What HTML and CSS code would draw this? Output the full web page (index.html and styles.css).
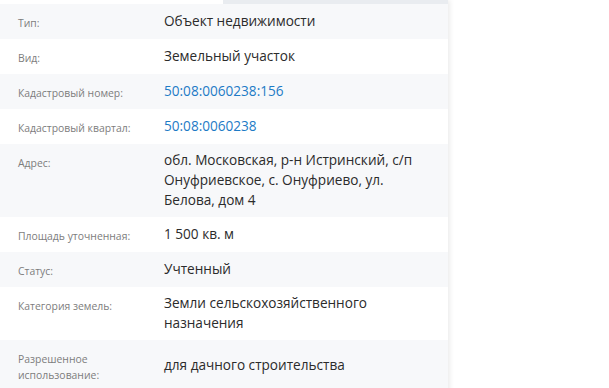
FILE: index.html
```html
<!DOCTYPE html>
<html lang="ru">
<head>
<meta charset="utf-8">
<link rel="stylesheet" href="styles.css">
</head>
<body>
<div class="panel">
  <div class="tabs"><div class="tab-gap"></div><div class="tab-rest"></div></div>
  <dl class="props">
    <div class="row alt"><dt>Тип:</dt><dd>Объект недвижимости</dd></div>
    <div class="row"><dt>Вид:</dt><dd>Земельный участок</dd></div>
    <div class="row alt"><dt>Кадастровый номер:</dt><dd><a class="link" href="#">50:08:0060238:156</a></dd></div>
    <div class="row"><dt>Кадастровый квартал:</dt><dd><a class="link" href="#">50:08:0060238</a></dd></div>
    <div class="row alt"><dt>Адрес:</dt><dd>обл. Московская, р-н Истринский, с/п Онуфриевское, с. Онуфриево, ул. Белова, дом 4</dd></div>
    <div class="row"><dt>Площадь уточненная:</dt><dd>1 500 кв. м</dd></div>
    <div class="row alt"><dt>Статус:</dt><dd>Учтенный</dd></div>
    <div class="row"><dt>Категория земель:</dt><dd>Земли сельскохозяйственного назначения</dd></div>
    <div class="row alt"><dt>Разрешенное использование:</dt><dd>для дачного строительства</dd></div>
  </dl>
</div>
</body>
</html>
```
FILE: styles.css
```css
html, body {
  margin: 0;
  padding: 0;
  background: #fff;
  overflow: hidden;
}
body {
  font-family: "Open Sans", "Noto Sans", sans-serif;
  color: #333;
}
.panel {
  width: 448px;
  background: #fff;
  box-shadow: 2px 0 5px rgba(0, 0, 0, 0.08);
  min-height: 400px;
}
.tabs {
  display: flex;
  height: 4px;
}
.tab-gap {
  width: 223px;
  background: #fff;
}
.tab-rest {
  flex: 1;
  background: #e9ecf0;
}
.props {
  margin: 0;
}
.row {
  display: grid;
  grid-template-columns: 146px 1fr;
  padding: 0 18px;
  background: #fff;
}
.row.alt {
  background: #f7f8fa;
}
.row dt {
  font-size: 10.4px;
  line-height: 16px;
  color: #7d7d7d;
  padding: 11px 0 8px;
  align-self: start;
}
.row dd {
  margin: 0;
  font-size: 13.6px;
  line-height: 20px;
  color: #2b2b2b;
  padding: 6px 8px 7px 0;
  align-self: center;
}
.link {
  color: #1e7bc6;
  text-decoration: none;
}
```
